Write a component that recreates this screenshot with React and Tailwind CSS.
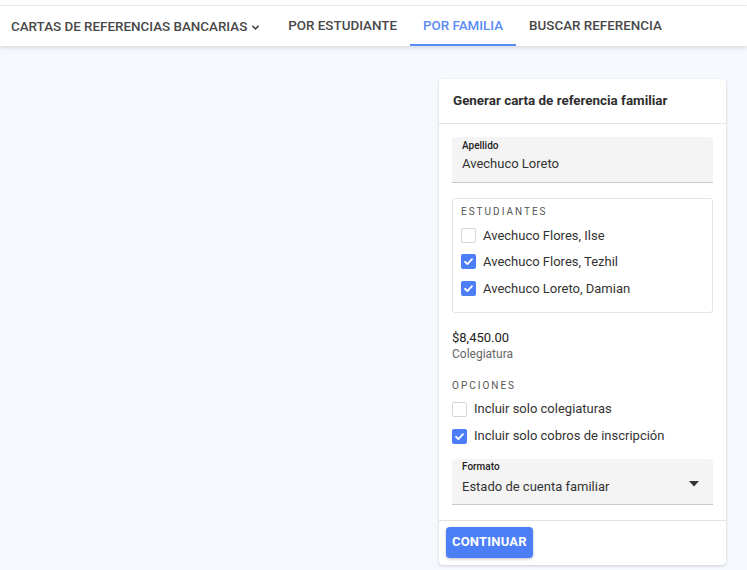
import { useState } from 'react';

function Check({ checked, onChange }) {
  return (
    <button
      type="button"
      onClick={onChange}
      className={`w-[15px] h-[15px] rounded-[2px] shrink-0 flex items-center justify-center ${
        checked ? 'bg-[#4c7ef7]' : 'bg-white border border-[#d6d6d6]'
      }`}
    >
      {checked && (
        <svg viewBox="0 0 12 12" className="w-[11px] h-[11px]">
          <path d="M2.2 6.3 L4.8 8.8 L9.8 3.4" fill="none" stroke="white" strokeWidth="2" strokeLinecap="round" strokeLinejoin="round" />
        </svg>
      )}
    </button>
  );
}

const tabs = ['POR ESTUDIANTE', 'POR FAMILIA', 'BUSCAR REFERENCIA'];

export default function App() {
  const [students, setStudents] = useState([
    { name: 'Avechuco Flores, Ilse', on: false },
    { name: 'Avechuco Flores, Tezhil', on: true },
    { name: 'Avechuco Loreto, Damian', on: true },
  ]);
  const [opts, setOpts] = useState([
    { label: 'Incluir solo colegiaturas', on: false },
    { label: 'Incluir solo cobros de inscripción', on: true },
  ]);

  const toggle = (list, set, i) => set(list.map((x, j) => (j === i ? { ...x, on: !x.on } : x)));

  return (
    <div className="min-h-[570px] bg-[#f5f9fd] text-[#333] font-['Roboto',sans-serif]">
      <div className="h-[6px] bg-white border-b border-[#ececec]" />
      <nav className="h-[40px] bg-white flex items-stretch shadow-[0_2px_4px_rgba(0,0,0,0.12)] relative">
        <div className="flex items-center pt-[3px] pl-[11px] pr-[15px] text-[13.4px] font-medium text-[#484848] gap-[4px]">
          CARTAS DE REFERENCIAS BANCARIAS
          <svg viewBox="0 0 10 10" className="w-[9px] h-[9px]">
            <path d="M1.5 3 L5 6.5 L8.5 3" fill="none" stroke="#444" strokeWidth="1.8" />
          </svg>
        </div>
        {tabs.map((t) => (
          <div
            key={t}
            className={`flex items-center pt-[3px] px-[13px] text-[13.4px] font-medium border-b-2 ${
              t === 'POR FAMILIA' ? 'text-[#5b8cf6] border-[#5b8cf6]' : 'text-[#484848] border-transparent'
            }`}
          >
            {t}
          </div>
        ))}
      </nav>

      <div className="flex justify-end pr-[21px] pt-[33px]">
        <div className="w-[287px] bg-white rounded-[4px] shadow-[0_1px_3px_rgba(0,0,0,0.18)]">
          <div className="h-[45px] pt-[1px] px-[14px] flex items-center border-b border-[#e2e2e2] text-[13.4px] font-bold text-[#2e2e2e]">
            Generar carta de referencia familiar
          </div>

          <div className="px-[13px] pt-[13px] pb-[15px] border-b border-[#e2e2e2]">
            <div className="h-[46px] bg-[#f4f4f4] rounded-t-[4px] border-b border-[#c8c8c8] px-[10px] pt-[2px]">
              <div className="text-[10px] font-medium text-[#222] leading-[14px]">Apellido</div>
              <div className="text-[13px] text-[#333] leading-[20px] mt-[1px]">Avechuco Loreto</div>
            </div>

            <div className="mt-[15px] border border-[#e4e4e4] rounded-[3px] px-[8px] pt-[7px] pb-[10px]">
              <div className="text-[10px] tracking-[2px] text-[#555] leading-[12px]">ESTUDIANTES</div>
              <div className="mt-[4px] flex flex-col">
                {students.map((s, i) => (
                  <div key={s.name} className="h-[26.5px] flex items-center gap-[7px] text-[13px] text-[#333]">
                    <Check checked={s.on} onChange={() => toggle(students, setStudents, i)} />
                    {s.name}
                  </div>
                ))}
              </div>
            </div>

            <div className="mt-[17px] text-[13px] text-[#222] leading-[16px]">$8,450.00</div>
            <div className="text-[12px] text-[#666] leading-[16px]">Colegiatura</div>

            <div className="mt-[18px] text-[10px] tracking-[2px] text-[#555] leading-[12px]">OPCIONES</div>
            <div className="mt-[4px] flex flex-col">
              {opts.map((o, i) => (
                <div key={o.label} className="h-[27px] flex items-center gap-[7px] text-[13px] text-[#333]">
                  <Check checked={o.on} onChange={() => toggle(opts, setOpts, i)} />
                  {o.label}
                </div>
              ))}
            </div>

            <div className="mt-[9px] h-[46px] bg-[#f4f4f4] rounded-t-[4px] border-b border-[#c8c8c8] px-[10px] flex items-start">
              <div className="flex-1 pt-[1px]">
                <div className="text-[10px] font-medium text-[#222] leading-[14px]">Formato</div>
                <div className="text-[13px] text-[#333] leading-[20px] mt-[3px]">Estado de cuenta familiar</div>
              </div>
              <svg viewBox="0 0 10 6" className="w-[10px] h-[6px] mr-[4px] mt-[22px]">
                <path d="M0 0 L10 0 L5 5.5 Z" fill="#333" />
              </svg>
            </div>
          </div>

          <div className="px-[7px] pt-[6px] pb-[7px]">
            <button
              type="button"
              className="h-[31px] px-[6px] rounded-[4px] bg-[#4c7ef7] text-white text-[13px] font-bold tracking-[0.2px] shadow-[0_1px_3px_rgba(0,0,0,0.25)]"
            >
              CONTINUAR
            </button>
          </div>
        </div>
      </div>
    </div>
  );
}
